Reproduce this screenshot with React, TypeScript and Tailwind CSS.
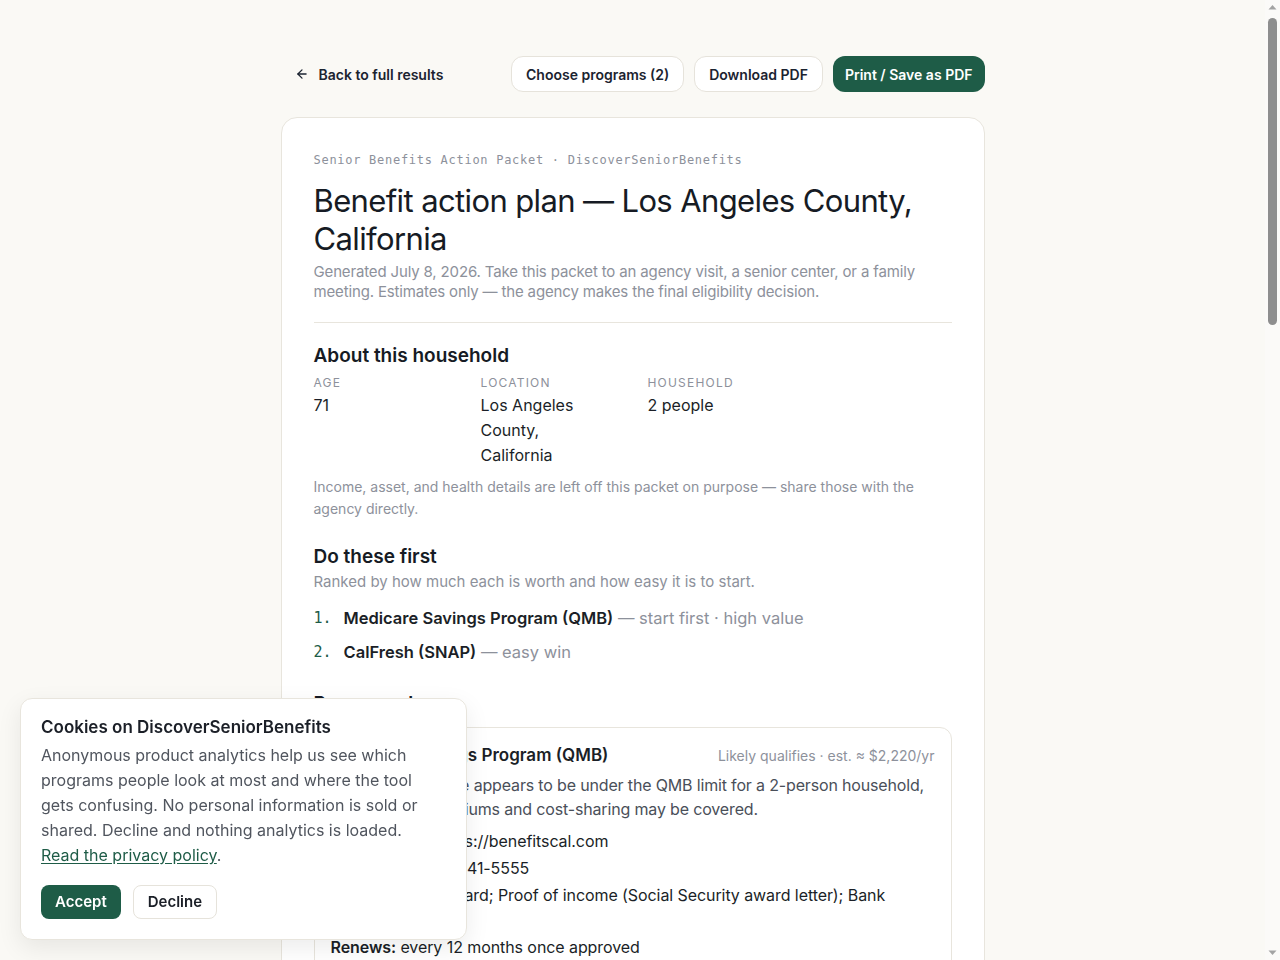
import React, { useState } from "react";
import { ArrowLeft } from "lucide-react";

// --- Packet data ---
interface HouseholdFact {
  label: string;
  value: string;
}

interface Priority {
  name: string;
  note: string;
}

interface ProgramPlan {
  name: string;
  status: string;
  summary: string;
  rows: { label: string; value: string }[];
}

const HOUSEHOLD: HouseholdFact[] = [
  { label: "Age", value: "71" },
  { label: "Location", value: "Los Angeles County, California" },
  { label: "Household", value: "2 people" },
];

const PRIORITIES: Priority[] = [
  { name: "Medicare Savings Program (QMB)", note: "start first · high value" },
  { name: "CalFresh (SNAP)", note: "easy win" },
];

const PLANS: ProgramPlan[] = [
  {
    name: "Medicare Savings Program (QMB)",
    status: "Likely qualifies · est. ≈ $2,220/yr",
    summary:
      "Household income appears to be under the QMB limit for a 2-person household, so Medicare premiums and cost-sharing may be covered.",
    rows: [
      { label: "Apply online:", value: "https://benefitscal.com" },
      { label: "Help line:", value: "1-800-541-5555" },
      {
        label: "Bring:",
        value: "Medicare card; Proof of income (Social Security award letter); Bank statements",
      },
      { label: "Renews:", value: "every 12 months once approved" },
    ],
  },
  {
    name: "CalFresh (SNAP)",
    status: "Likely qualifies · est. ≈ $1,150/yr",
    summary:
      "Households with a member 60 or older can deduct medical costs over $35 a month, which often raises the monthly benefit.",
    rows: [
      { label: "Apply online:", value: "https://benefitscal.com" },
      { label: "Help line:", value: "1-877-847-3663" },
      { label: "Bring:", value: "Photo ID; Proof of address; Proof of income; Rent or mortgage statement" },
      { label: "Renews:", value: "every 12 months, with a short report at 6 months" },
    ],
  },
];

const DOCUMENTS = [
  "Photo ID (driver license or state ID)",
  "Medicare card (red, white and blue)",
  "Social Security award letter for this year",
  "Last two months of bank statements",
  "Rent, mortgage or property tax statement",
  "Recent utility bill with your address",
  "Receipts for out-of-pocket medical costs",
];

const QUESTIONS = [
  "Can I apply for both programs at the same visit?",
  "How long does a decision usually take in Los Angeles County?",
  "Will QMB start paying my Part B premium right away, or from next month?",
  "Do medical costs I already paid this year count toward the CalFresh deduction?",
  "Who do I contact if a letter asks for more documents?",
];

const MONO = "font-['DejaVu_Sans_Mono','Liberation_Mono',monospace]";
const H2 = "text-[19px] font-semibold leading-[26px] text-[#161b24]";
const LABEL = "text-[12px] uppercase leading-4 tracking-[0.1em] text-[#8d919b]";

function PlanCard({ plan }: { plan: ProgramPlan }) {
  return (
    <div className="rounded-xl border border-[#e8e5dd] px-4 pt-[15px] pb-5">
      <div className="flex items-baseline justify-between gap-4">
        <h3 className="text-[17px] font-semibold leading-6 text-[#1b1f27]">{plan.name}</h3>
        <span className="shrink-0 text-[14px] text-[#8d919b]">{plan.status}</span>
      </div>
      <p className="mt-1.5 text-[16px] leading-6 tracking-[-0.01em] text-[#4a4f59]">{plan.summary}</p>
      <div className="mt-2 space-y-[2px] text-[16px] leading-[25px] tracking-[-0.005em] text-[#1b1f27]">
        {plan.rows.map((row) => (
          <p key={row.label}>
            <span className="font-semibold">{row.label}</span> {row.value}
          </p>
        ))}
      </div>
    </div>
  );
}

// Classic page scrollbar along the right edge (15px gutter)
function Scrollbar() {
  return (
    <div aria-hidden className="fixed top-0 right-0 bottom-0 flex w-[15px] flex-col items-center bg-[#fbfaf8]">
      <svg width="9" height="6" viewBox="0 0 9 6" className="mt-[4px]">
        <path d="M0.5 5.5 L4.5 1 L8.5 5.5 Z" fill="#a3a3a3" />
      </svg>
      <div className="mt-[8px] h-[307px] w-[9px] rounded-full bg-[#8e8e8e]" />
      <div className="flex-1" />
      <svg width="9" height="6" viewBox="0 0 9 6" className="mb-[4px]">
        <path d="M0.5 0.5 L4.5 5 L8.5 0.5 Z" fill="#a3a3a3" />
      </svg>
    </div>
  );
}

export default function App() {
  const [cookieOpen, setCookieOpen] = useState(true);

  return (
    <div className="min-h-screen bg-[#faf9f5] pr-[15px] font-['Inter',sans-serif] text-[#1b1f27]">
      <div className="mx-auto w-[704px] pt-14 pb-24">
        {/* Toolbar */}
        <div className="flex h-9 items-center justify-between">
          <a href="#" className="flex items-center gap-2.5 pl-3.5 text-[14px] font-semibold text-[#1b2330]">
            <ArrowLeft className="h-[14px] w-[14px]" strokeWidth={2.2} />
            Back to full results
          </a>
          <div className="flex items-center gap-2.5">
            <button className="h-9 rounded-xl border border-[#e6e3db] bg-white px-3.5 text-[14px] font-semibold text-[#1b2330]">
              Choose programs (2)
            </button>
            <button className="h-9 rounded-xl border border-[#e6e3db] bg-white px-3.5 text-[14px] font-semibold text-[#1b2330]">
              Download PDF
            </button>
            <button className="h-9 rounded-xl bg-[#1e5c47] px-3 text-[14px] font-semibold text-white">
              Print / Save as PDF
            </button>
          </div>
        </div>

        {/* Packet */}
        <div className="mt-[25px] rounded-2xl border border-[#e8e5dd] bg-white px-8 pt-[34px] pb-10">
          <p className={`${MONO} text-[12px] leading-4 tracking-[0.06em] text-[#8d919b]`}>
            Senior Benefits Action Packet · DiscoverSeniorBenefits
          </p>
          <h1 className="mt-[14px] text-[31px] font-normal leading-[38px] tracking-[-0.02em] text-[#161b24]">
            Benefit action plan — Los Angeles County, California
          </h1>
          <p className="mt-1 text-[15px] leading-5 tracking-[-0.01em] text-[#8d919b]">
            Generated July 8, 2026. Take this packet to an agency visit, a senior center, or a family meeting.
            Estimates only — the agency makes the final eligibility decision.
          </p>

          <div className="mt-5 border-t border-[#e8e5dd] pt-5">
            <h2 className={H2}>About this household</h2>
            <div className="mt-1.5 grid grid-cols-[120px_120px_120px] gap-x-[47px]">
              {HOUSEHOLD.map((fact) => (
                <div key={fact.label}>
                  <p className={LABEL}>{fact.label}</p>
                  <p className="mt-0.5 text-[16px] leading-[25px]">{fact.value}</p>
                </div>
              ))}
            </div>
            <p className="mt-2 text-[14px] leading-[22px] text-[#8d919b]">
              Income, asset, and health details are left off this packet on purpose — share those with the agency
              directly.
            </p>
          </div>

          {/* Priorities */}
          <h2 className={`mt-6 ${H2}`}>Do these first</h2>
          <p className="mt-0.5 text-[15px] leading-5 text-[#8d919b]">
            Ranked by how much each is worth and how easy it is to start.
          </p>
          <ol className="mt-3.5 space-y-2.5">
            {PRIORITIES.map((p, i) => (
              <li key={p.name} className="flex text-[16.5px] leading-6">
                <span className={`${MONO} w-[30px] shrink-0 text-[15px] text-[#1e5c47]`}>{i + 1}.</span>
                <span>
                  <span className="font-semibold">{p.name}</span>
                  <span className="text-[#8d919b]"> — {p.note}</span>
                </span>
              </li>
            ))}
          </ol>

          {/* Program plans */}
          <h2 className={`mt-[27px] ${H2}`}>Program plans</h2>
          <div className="mt-2.5 space-y-4">
            {PLANS.map((plan) => (
              <PlanCard key={plan.name} plan={plan} />
            ))}
          </div>

          {/* Documents */}
          <h2 className={`mt-8 ${H2}`}>Documents to gather</h2>
          <p className="mt-0.5 text-[15px] leading-5 text-[#8d919b]">
            One folder covers both applications. Bring copies — keep your originals.
          </p>
          <ul className="mt-3.5 space-y-2.5">
            {DOCUMENTS.map((doc) => (
              <li key={doc} className="flex items-center gap-3 text-[16px] leading-6">
                <span className="h-4 w-4 shrink-0 rounded border border-[#c9c5bb]" />
                {doc}
              </li>
            ))}
          </ul>

          {/* Questions */}
          <h2 className={`mt-8 ${H2}`}>Questions to ask the agency</h2>
          <ol className="mt-3.5 space-y-2.5">
            {QUESTIONS.map((q, i) => (
              <li key={q} className="flex text-[16px] leading-6">
                <span className={`${MONO} w-[30px] shrink-0 text-[15px] text-[#1e5c47]`}>{i + 1}.</span>
                {q}
              </li>
            ))}
          </ol>

          {/* Notes */}
          <h2 className={`mt-8 ${H2}`}>Notes from the visit</h2>
          <div className="mt-3.5 space-y-[34px]">
            {Array.from({ length: 8 }).map((_, i) => (
              <div key={i} className="border-b border-[#e8e5dd]" />
            ))}
          </div>
          <div className="mt-6 grid grid-cols-2 gap-4">
            <div className="rounded-xl border border-[#e8e5dd] p-4">
              <p className={LABEL}>Caseworker name</p>
              <div className="mt-7 border-b border-[#e8e5dd]" />
            </div>
            <div className="rounded-xl border border-[#e8e5dd] p-4">
              <p className={LABEL}>Follow-up date</p>
              <div className="mt-7 border-b border-[#e8e5dd]" />
            </div>
          </div>

          <div className="mt-8 border-t border-[#e8e5dd] pt-5">
            <p className="text-[14px] leading-[22px] text-[#8d919b]">
              DiscoverSeniorBenefits is not a government agency. Amounts are estimates based on published 2026
              limits for California and can change. Only the agency can decide eligibility.
            </p>
          </div>
        </div>
      </div>

      <Scrollbar />

      {/* Cookie notice */}
      {cookieOpen && (
        <div className="fixed bottom-5 left-5 w-[447px] rounded-xl border border-[#e8e5dd] bg-white px-5 pt-4 pb-5 shadow-[0_8px_24px_rgba(0,0,0,0.08)]">
          <h3 className="text-[17px] font-semibold leading-6 text-[#1b1f27]">Cookies on DiscoverSeniorBenefits</h3>
          <p className="mt-1 w-[395px] text-[16px] leading-[25px] text-[#50555e]">
            Anonymous product analytics help us see which programs people look at most and where the tool gets
            confusing. No personal information is sold or shared. Decline and nothing analytics is loaded.{" "}
            <a href="#" className="text-[#1e5c47] underline underline-offset-2">
              Read the privacy policy
            </a>
            .
          </p>
          <div className="mt-[17px] flex gap-3">
            <button
              onClick={() => setCookieOpen(false)}
              className="h-[34px] rounded-lg bg-[#1e5c47] px-3.5 text-[15px] font-semibold text-white"
            >
              Accept
            </button>
            <button
              onClick={() => setCookieOpen(false)}
              className="h-[34px] rounded-lg border border-[#e6e3db] bg-white px-3.5 text-[15px] font-semibold text-[#1b1f27]"
            >
              Decline
            </button>
          </div>
        </div>
      )}
    </div>
  );
}
